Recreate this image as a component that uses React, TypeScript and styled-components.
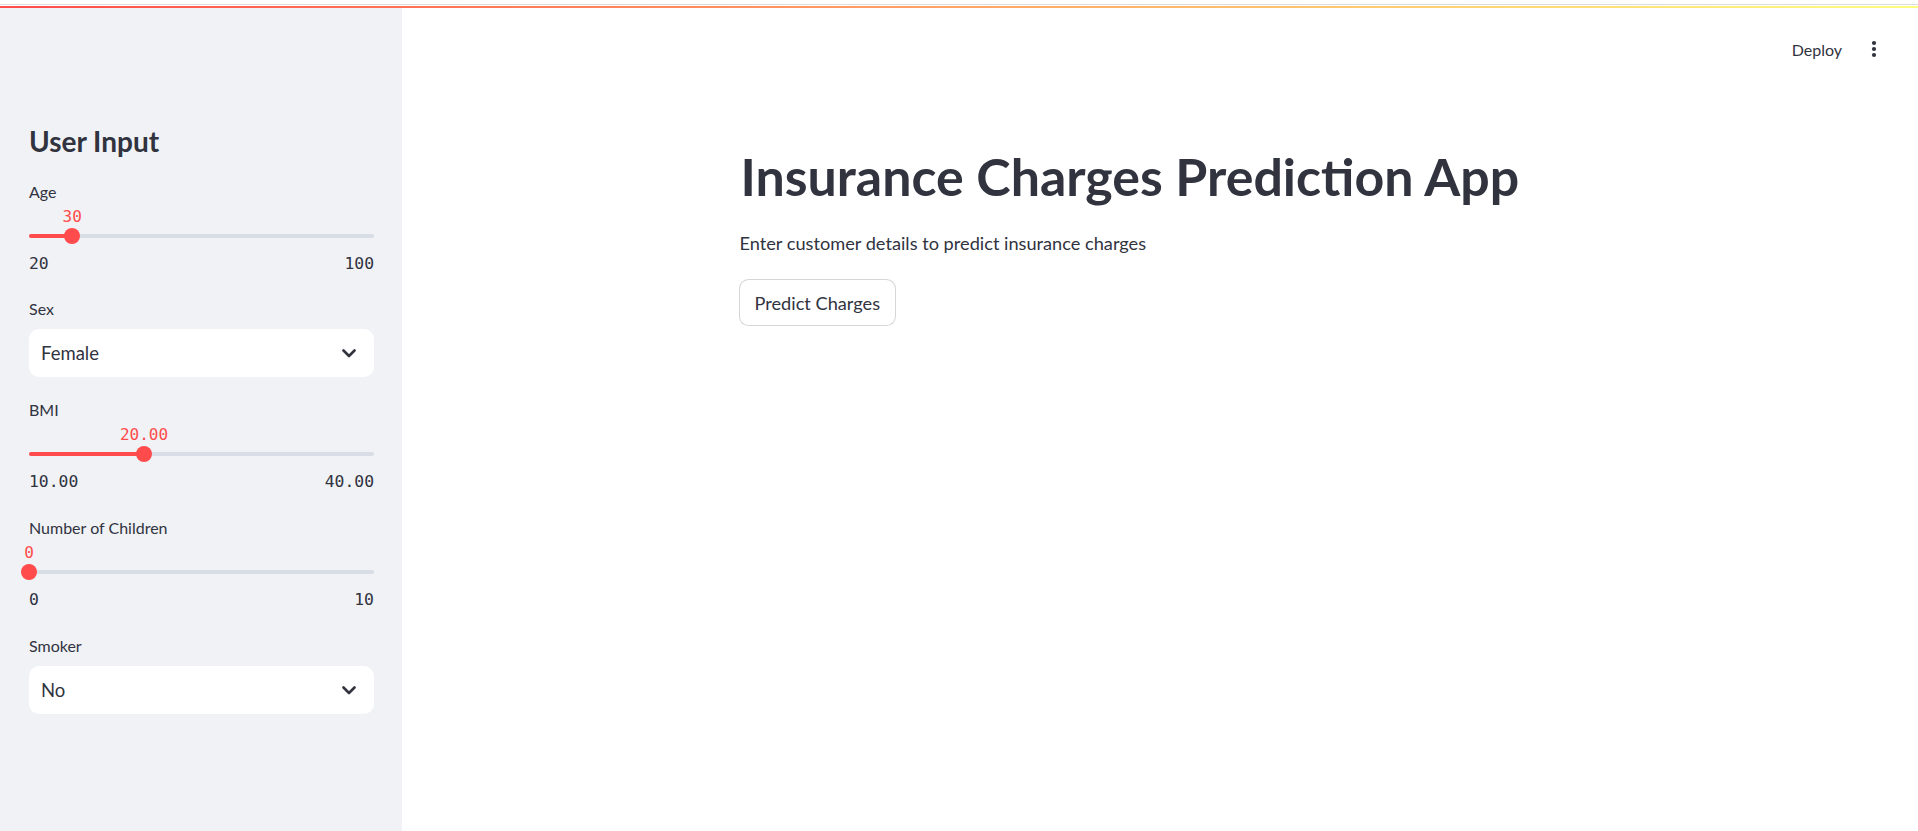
import React from "react";
import styled, { createGlobalStyle } from "styled-components";

const GlobalStyle = createGlobalStyle`
  html, body { margin: 0; padding: 0; background: #ffffff; }
  body {
    font-family: Lato, "Noto Sans", "Liberation Sans", sans-serif;
    color: #31333f;
    overflow: hidden;
  }
  #root { width: 1918px; height: 831px; }
  * { box-sizing: border-box; }
`;

const Page = styled.div`
  display: flex;
  flex-direction: column;
  width: 1918px;
  height: 831px;
`;

const Decoration = styled.div`
  display: flex;
  flex-direction: column;
  gap: 1px;
  padding-top: 4px;
  height: 8px;
  flex: none;
`;

const HairLine = styled.div`
  height: 1px;
  background: #dcdcdc;
`;

const GradientLine = styled.div`
  height: 2px;
  background: linear-gradient(90deg, #ff4b4b, #fffd80);
`;

const Body = styled.div`
  display: flex;
  flex: 1;
  min-height: 0;
`;

const Sidebar = styled.aside`
  width: 402px;
  flex: none;
  background: #f0f2f6;
  padding: 115px 28px 0 29px;
  display: flex;
  flex-direction: column;
`;

const SidebarHeading = styled.h2`
  margin: 0 0 21px;
  height: 36px;
  line-height: 36px;
  font-size: 28px;
  font-weight: 700;
  color: #31333f;
`;

const WidgetStack = styled.div`
  display: flex;
  flex-direction: column;
`;

const Field = styled.div<{ $gapAfter: number }>`
  display: flex;
  flex-direction: column;
  margin-bottom: ${(p) => p.$gapAfter}px;
`;

const FieldLabel = styled.label`
  height: 24px;
  line-height: 24px;
  font-size: 16px;
  color: #31333f;
`;

const ValueRow = styled.div`
  position: relative;
  height: 25px;
`;

const ValueBubble = styled.span`
  position: absolute;
  top: 0;
  transform: translateX(-50%);
  line-height: 25px;
  font-family: "DejaVu Sans Mono", "Liberation Mono", monospace;
  font-size: 16px;
  color: #ff4b4b;
  white-space: nowrap;
`;

const TrackArea = styled.div`
  position: relative;
  height: 14px;
  display: flex;
  align-items: center;
`;

const Track = styled.div`
  position: relative;
  width: 100%;
  height: 4px;
  border-radius: 2px;
  background: #d9dde6;
`;

const TrackFill = styled.div`
  position: absolute;
  left: 0;
  top: 0;
  height: 4px;
  border-radius: 2px;
  background: #ff4b4b;
`;

const Thumb = styled.div`
  position: absolute;
  top: 50%;
  width: 16px;
  height: 16px;
  border-radius: 50%;
  background: #ff4b4b;
  transform: translate(-50%, -50%);
`;

const Ticks = styled.div`
  display: flex;
  justify-content: space-between;
  margin-top: 9px;
  height: 24px;
  line-height: 24px;
  font-family: "DejaVu Sans Mono", "Liberation Mono", monospace;
  font-size: 16.4px;
  color: #31333f;
`;

const SelectBox = styled.div`
  margin-top: 8px;
  height: 48px;
  background: #ffffff;
  border-radius: 10px;
  padding: 0 18px 0 12px;
  display: flex;
  align-items: center;
  justify-content: space-between;
  font-size: 18.5px;
  color: #31333f;
`;

const Main = styled.main`
  flex: 1;
  display: flex;
  flex-direction: column;
  min-width: 0;
`;

const Header = styled.header`
  height: 82px;
  display: flex;
  align-items: center;
  justify-content: flex-end;
  padding-right: 24px;
  gap: 12px;
`;

const DeployButton = styled.button`
  border: none;
  background: transparent;
  font-family: inherit;
  font-size: 16px;
  color: #31333f;
  padding: 0;
  cursor: pointer;
`;

const MenuButton = styled.button`
  width: 40px;
  height: 40px;
  border: none;
  background: transparent;
  display: flex;
  align-items: center;
  justify-content: center;
  padding: 0;
  cursor: pointer;
`;

const Content = styled.div`
  width: 883px;
  margin: 0 auto;
  padding: 55px 19px 0 21px;
  display: flex;
  flex-direction: column;
  align-items: flex-start;
`;

const Title = styled.h1`
  margin: 0 0 0 1px;
  height: 63px;
  line-height: 63px;
  font-size: 51.9px;
  font-weight: 700;
  color: #31333f;
  white-space: nowrap;
`;

const Subtitle = styled.p`
  margin: 20px 0 0;
  line-height: 31px;
  font-size: 18.2px;
  color: #31333f;
`;

const PrimaryButton = styled.button`
  margin-top: 20px;
  margin-left: -1px;
  height: 47px;
  padding: 0 15px;
  border: 1px solid rgba(49, 51, 63, 0.2);
  border-radius: 9.6px;
  background: #ffffff;
  font-family: inherit;
  font-size: 18.2px;
  color: #31333f;
  cursor: pointer;
`;

const Chevron = () => (
  <svg width="14" height="9" viewBox="0 0 14 9" aria-hidden="true">
    <path d="M1.5 1.5 L7 7 L12.5 1.5" fill="none" stroke="#31333f" strokeWidth="2.6" strokeLinecap="round" strokeLinejoin="round" />
  </svg>
);

const Kebab = () => (
  <svg width="6" height="18" viewBox="0 0 6 18" aria-hidden="true">
    <circle cx="3" cy="3" r="2.1" fill="#31333f" />
    <circle cx="3" cy="9" r="2.1" fill="#31333f" />
    <circle cx="3" cy="15" r="2.1" fill="#31333f" />
  </svg>
);

type SliderProps = {
  label: string;
  min: number;
  max: number;
  value: number;
  decimals?: number;
  gapAfter: number;
};

const Slider = ({ label, min, max, value, decimals = 0, gapAfter }: SliderProps) => {
  const pct = ((value - min) / (max - min)) * 100;
  const fmt = (n: number) => n.toFixed(decimals);
  return (
    <Field $gapAfter={gapAfter}>
      <FieldLabel>{label}</FieldLabel>
      <ValueRow>
        <ValueBubble style={{ left: `${pct}%` }}>{fmt(value)}</ValueBubble>
      </ValueRow>
      <TrackArea>
        <Track>
          <TrackFill style={{ width: `${pct}%` }} />
          <Thumb style={{ left: `${pct}%` }} />
        </Track>
      </TrackArea>
      <Ticks>
        <span>{fmt(min)}</span>
        <span>{fmt(max)}</span>
      </Ticks>
    </Field>
  );
};

const Select = ({ label, value, gapAfter }: { label: string; value: string; gapAfter: number }) => (
  <Field $gapAfter={gapAfter}>
    <FieldLabel>{label}</FieldLabel>
    <SelectBox>
      <span>{value}</span>
      <Chevron />
    </SelectBox>
  </Field>
);

export default function App() {
  return (
    <Page>
      <GlobalStyle />
      <Decoration>
        <HairLine />
        <GradientLine />
      </Decoration>
      <Body>
        <Sidebar>
          <SidebarHeading>User Input</SidebarHeading>
          <WidgetStack>
            <Slider label="Age" min={20} max={100} value={30} gapAfter={21} />
            <Select label="Sex" value="Female" gapAfter={21} />
            <Slider label="BMI" min={10} max={40} value={20} decimals={2} gapAfter={22} />
            <Slider label="Number of Children" min={0} max={10} value={0} gapAfter={22} />
            <Select label="Smoker" value="No" gapAfter={0} />
          </WidgetStack>
        </Sidebar>
        <Main>
          <Header>
            <DeployButton>Deploy</DeployButton>
            <MenuButton aria-label="Main menu">
              <Kebab />
            </MenuButton>
          </Header>
          <Content>
            <Title>Insurance Charges Prediction App</Title>
            <Subtitle>Enter customer details to predict insurance charges</Subtitle>
            <PrimaryButton>Predict Charges</PrimaryButton>
          </Content>
        </Main>
      </Body>
    </Page>
  );
}
